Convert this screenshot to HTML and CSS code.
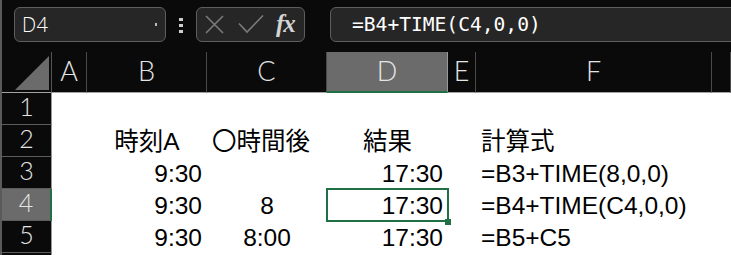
FILE: index.html
```html
<!DOCTYPE html>
<html lang="ja">
<head>
    <meta charset="UTF-8">
    <title>TIME関数</title>
    <link rel="stylesheet" href="styles.css">
</head>
<body>
    <div class="toolbar">
        <div class="namebox">
            <span class="name">D4</span>
            <span class="name-drop"></span>
        </div>
        <div class="grip"><i></i><i></i><i></i></div>
        <div class="fxbox">
            <svg class="fx-icons" width="70" height="33" viewBox="0 0 70 33">
                <path d="M9 8 L26 25 M26 8 L9 25" stroke="#7b7b7b" stroke-width="1.6" fill="none"/>
                <path d="M42 15.5 L50 24 L66 7.5" stroke="#7b7b7b" stroke-width="1.6" fill="none"/>
            </svg>
            <span class="fx">fx</span>
        </div>
        <div class="formula">=B4+TIME(C4,0,0)</div>
    </div>

    <div class="sheet">
        <!-- column headers -->
        <div class="corner"><span class="corner-tri"></span></div>
        <div class="colhead">A</div>
        <div class="colhead">B</div>
        <div class="colhead">C</div>
        <div class="colhead active">D</div>
        <div class="colhead">E</div>
        <div class="colhead">F</div>
        <div class="colhead"></div>

        <!-- row 1 -->
        <div class="rowhead">1</div>
        <div class="cell"></div><div class="cell"></div><div class="cell"></div>
        <div class="cell"></div><div class="cell"></div><div class="cell"></div><div class="cell"></div>

        <!-- row 2 -->
        <div class="rowhead">2</div>
        <div class="cell"></div>
        <div class="cell center">時刻A</div>
        <div class="cell left">〇時間後</div>
        <div class="cell center">結果</div>
        <div class="cell"></div>
        <div class="cell left">計算式</div>
        <div class="cell"></div>

        <!-- row 3 -->
        <div class="rowhead">3</div>
        <div class="cell"></div>
        <div class="cell right">9:30</div>
        <div class="cell"></div>
        <div class="cell right">17:30</div>
        <div class="cell"></div>
        <div class="cell left">=B3+TIME(8,0,0)</div>
        <div class="cell"></div>

        <!-- row 4 -->
        <div class="rowhead active">4</div>
        <div class="cell"></div>
        <div class="cell right">9:30</div>
        <div class="cell center">8</div>
        <div class="cell right selected">17:30</div>
        <div class="cell"></div>
        <div class="cell left">=B4+TIME(C4,0,0)</div>
        <div class="cell"></div>

        <!-- row 5 -->
        <div class="rowhead">5</div>
        <div class="cell"></div>
        <div class="cell right">9:30</div>
        <div class="cell center">8:00</div>
        <div class="cell right">17:30</div>
        <div class="cell"></div>
        <div class="cell left">=B5+C5</div>
        <div class="cell"></div>

        <!-- row 6 -->
        <div class="rowhead">6</div>
        <div class="cell"></div><div class="cell"></div><div class="cell"></div>
        <div class="cell"></div><div class="cell"></div><div class="cell"></div><div class="cell"></div>
    </div>
</body>
</html>
```

FILE: styles.css
```css
:root {
    --bg-dark: #0a0a0a;
    --box-bg: #262626;
    --box-border: #5e5e5e;
    --head-text: #e4e4e4;
    --head-active: #6b6b6b;
    --green: #1f7145;
}

* {
    margin: 0;
    padding: 0;
    box-sizing: border-box;
}

html, body {
    height: 100%;
    overflow: hidden;
}

body {
    background-color: var(--bg-dark);
    border-left: 2px solid #5a5a5a;
    font-family: 'Liberation Sans', 'Noto Sans CJK JP', sans-serif;
}

/* formula bar */
.toolbar {
    display: flex;
    align-items: flex-start;
    height: 52px;
    padding: 7px 0 0 12px;
}

.namebox,
.fxbox,
.formula {
    height: 35px;
    background-color: var(--box-bg);
    border: 1px solid var(--box-border);
    border-radius: 6px;
}

.namebox {
    position: relative;
    display: flex;
    align-items: center;
    width: 152px;
    padding-left: 7px;
}

.name {
    color: #fff;
    font-family: 'Open Sans', 'DejaVu Sans', sans-serif;
    font-weight: 300;
    font-size: 20px;
    letter-spacing: 0.5px;
}

.name-drop {
    position: absolute;
    right: 8px;
    top: 15px;
    width: 2px;
    height: 3px;
    background-color: #bbb;
}

.grip {
    display: flex;
    flex-direction: column;
    gap: 3px;
    margin: 11px 13px 0 13px;
}

.grip i {
    display: block;
    width: 4px;
    height: 3px;
    background-color: #cfcfcf;
}

.fxbox {
    display: flex;
    align-items: center;
    width: 109px;
}

.fx-icons {
    display: block;
}

.fx {
    margin-left: 9px;
    margin-top: -2px;
    color: #d4d4d4;
    font-family: 'Liberation Serif', serif;
    font-style: italic;
    font-weight: bold;
    font-size: 25px;
    letter-spacing: -1px;
}

.formula {
    flex: 1;
    display: flex;
    align-items: center;
    margin-left: 25px;
    margin-right: -10px;
    padding-left: 21px;
    color: #fff;
    font-family: 'DejaVu Sans Mono', monospace;
    font-size: 19.6px;
    border-top-right-radius: 0;
    border-bottom-right-radius: 0;
}

/* grid */
.sheet {
    display: grid;
    grid-template-columns: 50px 35px 120px 120px 121px 28px 236px 1fr;
    grid-template-rows: 41px repeat(6, 32px);
    background-color: #fff;
}

.corner,
.colhead {
    position: relative;
    background-color: var(--bg-dark);
    border-bottom: 1px solid #a3a3a3;
}

.corner {
    border-right: 1px solid #555;
}

.corner-tri {
    position: absolute;
    right: 2px;
    bottom: 2px;
    width: 0;
    height: 0;
    border-left: 34px solid transparent;
    border-bottom: 34px solid #6b6b6b;
}

.colhead {
    display: flex;
    justify-content: center;
    align-items: center;
    padding-bottom: 2px;
    border-right: 1px solid #4a4a4a;
    color: var(--head-text);
    font-family: 'Lato', 'Open Sans', sans-serif;
    font-weight: 300;
    font-size: 27px;
    line-height: 30px;
}

.colhead.active {
    background-color: var(--head-active);
    border-bottom: 2px solid var(--green);
    border-right-color: #9a9a9a;
}

.rowhead {
    display: flex;
    justify-content: center;
    align-items: center;
    padding-bottom: 6px;
    background-color: var(--bg-dark);
    border-bottom: 1px solid #5c5c5c;
    border-right: 1px solid #9a9a9a;
    color: var(--head-text);
    font-family: 'Lato', 'Open Sans', sans-serif;
    font-weight: 300;
    font-size: 25px;
    line-height: 24px;
}

.rowhead.active {
    background-color: var(--head-active);
    border-right: 2px solid var(--green);
}

.cell {
    height: 32px;
    padding-top: 2px;
    line-height: 30px;
    font-size: 24.5px;
    color: #000;
    white-space: nowrap;
}

.cell.right {
    text-align: right;
    padding-right: 5px;
}

.cell.center {
    text-align: center;
}

.cell.left {
    padding-left: 5px;
}

.cell.selected {
    position: relative;
    z-index: 1;
}

.cell.selected::after {
    content: "";
    position: absolute;
    top: -1px;
    left: -1px;
    right: -1px;
    bottom: -1px;
    border: 2px solid var(--green);
}

.cell.selected::before {
    content: "";
    position: absolute;
    right: -3px;
    bottom: -4px;
    width: 6px;
    height: 6px;
    background-color: var(--green);
    z-index: 2;
}
```
